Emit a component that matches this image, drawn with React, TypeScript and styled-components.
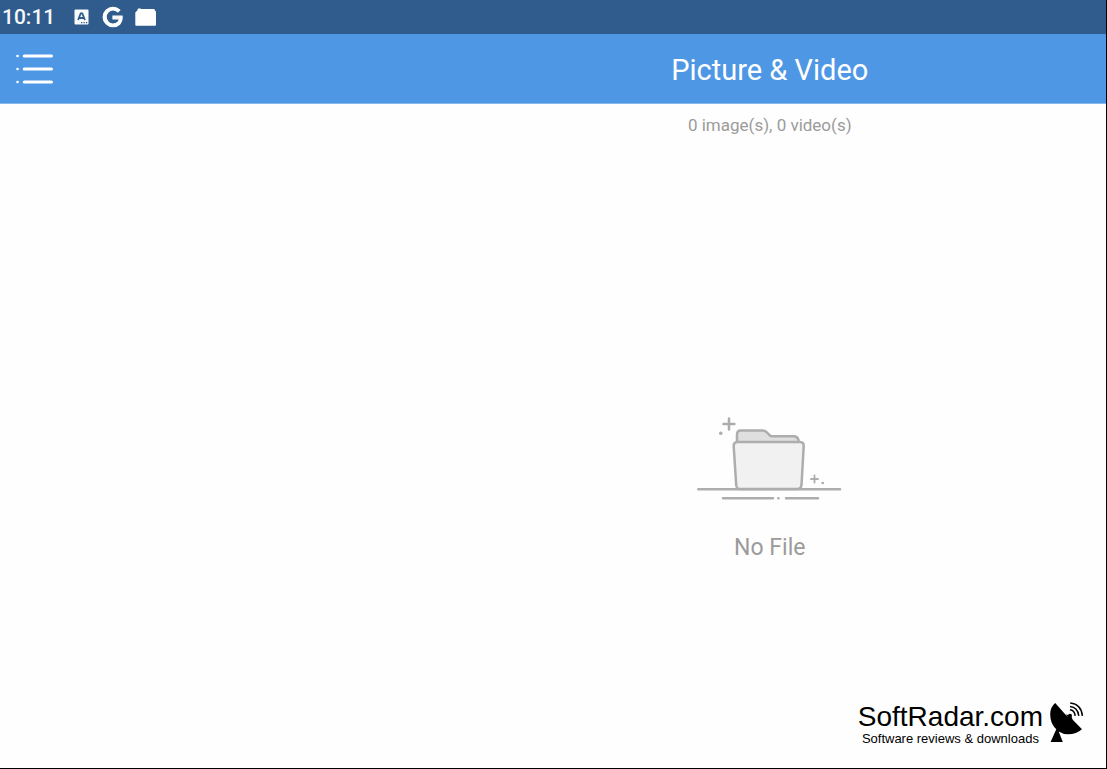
import React from "react";
import styled, { createGlobalStyle } from "styled-components";

const GlobalStyle = createGlobalStyle`
  * {
    box-sizing: border-box;
  }

  body {
    margin: 0;
    background: #fefefe;
    font-family: Roboto, "Liberation Sans", sans-serif;
  }
`;

const Screen = styled.div`
  display: flex;
  flex-direction: column;
  min-height: 100vh;
  border-right: 1px solid #000;
  border-bottom: 1px solid #000;
  background: #fefefe;
`;

const StatusBar = styled.div`
  display: flex;
  align-items: center;
  height: 34px;
  padding-left: 2px;
  background: #2f5c8c;
  color: #f5f8fb;
`;

const Clock = styled.time`
  width: 71px;
  font-size: 21px;
  line-height: 24px;
  font-weight: 500;
`;

const StatusIcons = styled.div`
  display: flex;
  align-items: center;
  gap: 12px;

  svg {
    display: block;
  }
`;

const AppBar = styled.header`
  display: grid;
  grid-template-columns: 39.2% 1fr;
  align-items: center;
  height: 70px;
  background: #4e97e5;
  border-bottom: 1px solid #85b6ed;
  color: #fff;
`;

const MenuButton = styled.button`
  justify-self: start;
  margin-left: 12px;
  padding: 4px;
  border: 0;
  background: none;
  color: inherit;

  svg {
    display: block;
  }
`;

const Title = styled.h1`
  margin: 0;
  padding-top: 2px;
  font-size: 29px;
  line-height: 36px;
  font-weight: 400;
  text-align: center;
`;

const Main = styled.main`
  display: flex;
  flex: 1;
  flex-direction: column;
  margin-left: 39.2%;
  text-align: center;
  color: #9b9b9b;
`;

const Summary = styled.p`
  margin: 9px 0 0;
  font-size: 17px;
  line-height: 24px;
`;

const EmptyState = styled.section`
  display: flex;
  flex: 1;
  flex-direction: column;
  align-items: center;
  justify-content: center;
  gap: 32px;
  padding-top: 139px;
`;

const EmptyLabel = styled.p`
  margin: 0;
  font-size: 23px;
  line-height: 28px;
`;

const Footer = styled.footer`
  display: flex;
  align-items: flex-start;
  justify-content: flex-end;
  gap: 5px;
  padding: 0 22px 22px 0;
  color: #000;
  font-family: "Liberation Sans", Arial, sans-serif;
  text-align: center;
`;

const BrandName = styled.div`
  font-size: 28px;
  line-height: 30px;
`;

const BrandTagline = styled.div`
  font-size: 13px;
  line-height: 14px;
`;

const KeyboardIcon = () => (
  <svg width="16" height="16" viewBox="0 0 16 16" aria-hidden="true">
    <rect x="1.5" y="0.5" width="14" height="15" rx="1" fill="#f8fafc" />
    <path d="M5.1 11 7.7 4.4h1.6L11.9 11M6.3 9h4.4" fill="none" stroke="#2f5c8c" strokeWidth="1.8" />
    <path d="M8 13.6h1.3M10.5 13.6h1.3M12.9 13.6h1.3" stroke="#2f5c8c" strokeWidth="1.4" />
  </svg>
);

const GoogleIcon = () => (
  <svg width="22" height="22" viewBox="-2.4 -1.6 27.2 27.2" aria-hidden="true">
    <path
      d="M12.48 10.92v3.28h7.84c-.24 1.84-.853 3.187-1.787 4.133-1.147 1.147-2.933 2.4-6.053 2.4-4.827 0-8.6-3.893-8.6-8.72s3.773-8.72 8.6-8.72c2.6 0 4.507 1.027 5.907 2.347l2.307-2.307C18.747 1.44 16.133 0 12.48 0 5.867 0 .307 5.387.307 12s5.56 12 12.173 12c3.573 0 6.267-1.173 8.373-3.36 2.16-2.16 2.84-5.213 2.84-7.667 0-.76-.053-1.467-.173-2.053H12.48z"
      fill="#fff"
      stroke="#fff"
      strokeWidth="1.6"
    />
  </svg>
);

const CardIcon = () => (
  <svg width="22" height="18" viewBox="0 0 22 18" aria-hidden="true">
    <path
      d="M0.3 4.5 2.3 2.6 3 0.5H5.5L6.3 1H18.9Q19.8 1 19.9 2.4L21 3.6V16.7Q21 17.7 20 17.7H1.3Q0.3 17.7 0.3 16.7Z"
      fill="#fff"
    />
  </svg>
);

const MenuIcon = () => (
  <svg width="38" height="32" viewBox="0 0 38 32" fill="none" stroke="currentColor" strokeWidth="3" strokeLinecap="round" aria-hidden="true">
    <path d="M8.2 3h27.3M8.2 16h27.3M8.2 29h27.3" />
    <path d="M1.5 3h.1M1.5 16h.1M1.5 29h.1" strokeWidth="2.6" />
  </svg>
);

const FolderArt = () => (
  <svg width="146" height="86" viewBox="1 0 146 86" fill="none" stroke="#adadad" strokeWidth="2.5" strokeLinecap="round" strokeLinejoin="round" aria-hidden="true">
    <path
      d="M41 26V18.5Q41 14.5 45 14.5H67Q69.5 14.5 71 16.5L73.5 19.2Q74.5 20.3 76.5 20.3H98Q101.5 20.3 102.5 24V28"
      fill="#dfdfdf"
    />
    <path
      d="M41.5 26H104Q108 26 107.7 30.5L105.5 69Q105 73 101.5 73H44Q40.5 73 40.2 69L37.7 30.5Q37.4 26 41.5 26Z"
      fill="#f1f1f1"
    />
    <path d="M2.3 73.3H144M27 82.2H77M90 82.2H122" />
    <path d="M82.3 82.2h.1" />
    <path d="M33 2.5V13.5M27.5 8H38.5" />
    <path d="M24.7 17.2h.1" strokeWidth="3.4" />
    <path d="M118.5 59.5v7M115 63h7" strokeWidth="1.8" />
    <path d="M126.7 67h.1" strokeWidth="2.6" />
  </svg>
);

const SatelliteDish = () => (
  <svg width="36" height="44" viewBox="0 0 36 44" aria-hidden="true">
    <path d="M7.2 1Q2.3 5 2.2 12C2.2 18 4 22.5 6.8 25.8L8.3 27.3 2.6 40H14.8L10.7 29.5Q15 32.3 20 32.3Q28.5 32 34 27.2L23.5 16.5 18.3 13.5Z" />
    <circle cx="22" cy="13.8" r="2" />
    <path d="M17.5 12.5 20.5 13 24 15.5 24.5 18.5Z" />
    <path
      d="M22 7.8Q26.5 8.2 27.2 13.8M22 4.4Q29.8 5.2 30.8 13.8M22.2 1Q33.2 2 34.4 13.8"
      fill="none"
      stroke="#000"
      strokeWidth="1.5"
    />
  </svg>
);

export default function App() {
  return (
    <>
      <GlobalStyle />
      <Screen>
        <StatusBar>
          <Clock>10:11</Clock>
          <StatusIcons>
            <KeyboardIcon />
            <GoogleIcon />
            <CardIcon />
          </StatusIcons>
        </StatusBar>
        <AppBar>
          <MenuButton type="button" aria-label="Menu">
            <MenuIcon />
          </MenuButton>
          <Title>Picture &amp; Video</Title>
        </AppBar>
        <Main>
          <Summary>0 image(s), 0 video(s)</Summary>
          <EmptyState>
            <FolderArt />
            <EmptyLabel>No File</EmptyLabel>
          </EmptyState>
        </Main>
        <Footer>
          <div>
            <BrandName>SoftRadar.com</BrandName>
            <BrandTagline>Software reviews &amp; downloads</BrandTagline>
          </div>
          <SatelliteDish />
        </Footer>
      </Screen>
    </>
  );
}
